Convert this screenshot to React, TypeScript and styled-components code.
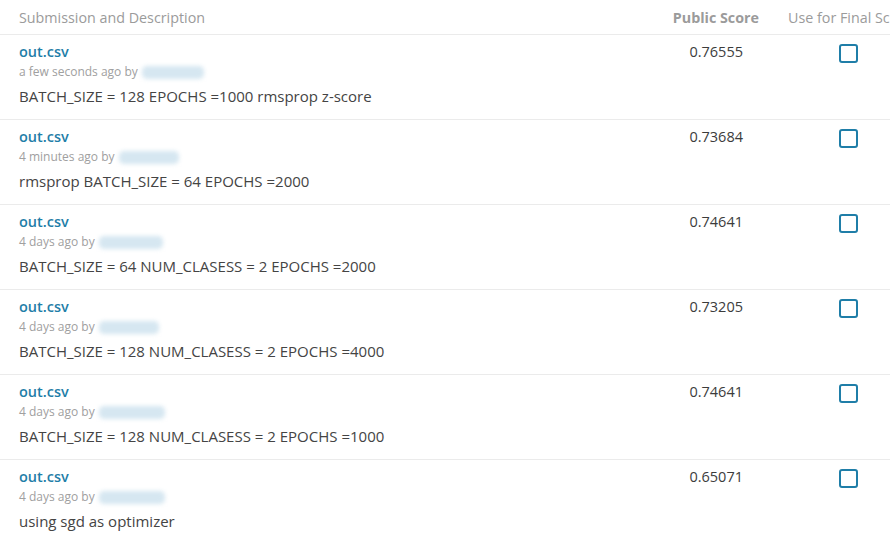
import React from 'react';
import styled, { createGlobalStyle } from 'styled-components';

const GlobalStyle = createGlobalStyle`
    html, body {
        margin: 0;
        padding: 0;
        background: #fff;
        overflow: hidden;
    }
    body {
        font-family: 'Open Sans', 'Liberation Sans', sans-serif;
    }
`;

const Table = styled.div`
    width: 1000px;
`;

const Row = styled.div`
    display: grid;
    grid-template-columns: 655px 120px 146px;
    border-bottom: 1px solid #ebebeb;
`;

const HeaderRow = styled(Row)`
    height: 34px;
    align-items: center;
    font-size: 14.3px;
    color: #9b9b9b;
`;

const HeaderCell = styled.div<{ align?: 'left' | 'right'; bold?: boolean }>`
    text-align: ${props => props.align || 'left'};
    font-weight: ${props => (props.bold ? 700 : 400)};
    padding: ${props => (props.align === 'right' ? '0 16px 0 0' : '0 0 0 19px')};
    white-space: nowrap;
`;

const FinalHeader = styled.div`
    padding-left: 13px;
    white-space: nowrap;
`;

const SubmissionCell = styled.div`
    padding: 8px 0 13px 19px;
`;

const FileName = styled.a`
    display: block;
    font-size: 14.5px;
    line-height: 18px;
    font-weight: 600;
    color: #1f7ea8;
    text-decoration: none;
`;

const Meta = styled.div`
    margin-top: 3px;
    font-size: 12px;
    line-height: 16px;
    color: #a0a0a0;
    display: flex;
    align-items: center;
`;

const Blur = styled.span<{ w: number }>`
    display: inline-block;
    margin-left: 4px;
    width: ${props => props.w}px;
    height: 13px;
    background: #d6e7f1;
    border-radius: 5px;
    filter: blur(2px);
`;

const Description = styled.div`
    margin-top: 6px;
    font-size: 15px;
    line-height: 20px;
    color: #444;
`;

const ScoreCell = styled.div`
    padding: 8px 32px 0 0;
    text-align: right;
    font-size: 14.5px;
    line-height: 18px;
    color: #3c3c3c;
    font-weight: 500;
`;

const CheckCell = styled.div`
    display: flex;
    justify-content: center;
    padding-top: 9px;
`;

const Checkbox = styled.span`
    width: 15px;
    height: 15px;
    border: 2px solid #1f7ea8;
    border-radius: 3px;
    display: block;
`;

const submissions = [
    { when: 'a few seconds ago by', blur: 62, score: '0.76555', desc: 'BATCH_SIZE = 128 EPOCHS =1000 rmsprop z-score' },
    { when: '4 minutes ago by', blur: 60, score: '0.73684', desc: 'rmsprop BATCH_SIZE = 64 EPOCHS =2000' },
    { when: '4 days ago by', blur: 64, score: '0.74641', desc: 'BATCH_SIZE = 64 NUM_CLASESS = 2 EPOCHS =2000' },
    { when: '4 days ago by', blur: 60, score: '0.73205', desc: 'BATCH_SIZE = 128 NUM_CLASESS = 2 EPOCHS =4000' },
    { when: '4 days ago by', blur: 66, score: '0.74641', desc: 'BATCH_SIZE = 128 NUM_CLASESS = 2 EPOCHS =1000' },
    { when: '4 days ago by', blur: 66, score: '0.65071', desc: 'using sgd as optimizer' },
];

const App = () => (
    <>
        <GlobalStyle />
        <Table>
            <HeaderRow>
                <HeaderCell>Submission and Description</HeaderCell>
                <HeaderCell align="right" bold>
                    Public Score
                </HeaderCell>
                <FinalHeader>Use for Final Score</FinalHeader>
            </HeaderRow>
            {submissions.map((s, i) => (
                <Row key={i}>
                    <SubmissionCell>
                        <FileName href="#">out.csv</FileName>
                        <Meta>
                            {s.when}
                            <Blur w={s.blur} />
                        </Meta>
                        <Description>{s.desc}</Description>
                    </SubmissionCell>
                    <ScoreCell>{s.score}</ScoreCell>
                    <CheckCell>
                        <Checkbox />
                    </CheckCell>
                </Row>
            ))}
        </Table>
    </>
);

export default App;
